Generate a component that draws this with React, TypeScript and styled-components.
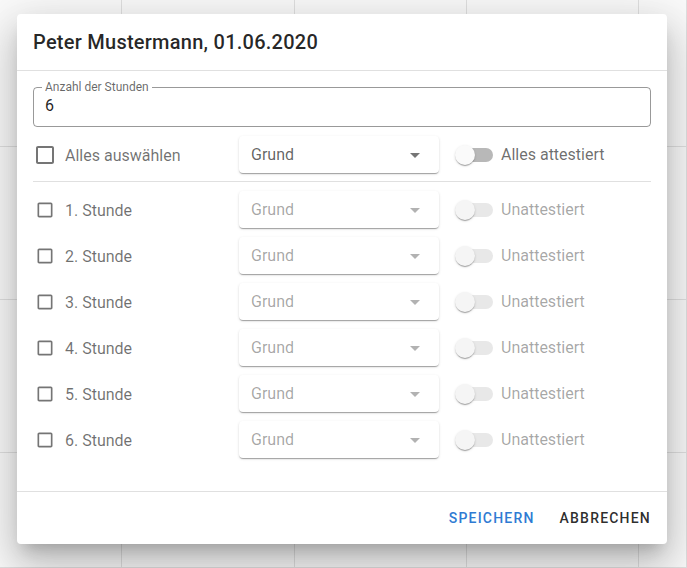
import React from "react";
import styled, { createGlobalStyle } from "styled-components";

const Global = createGlobalStyle`
  html, body { margin: 0; padding: 0; background: #fafafa; }
  body { font-family: Roboto, "Noto Sans", Arial, sans-serif; }
  * { box-sizing: border-box; }
`;

const Page = styled.div`
  position: relative;
  width: 100%;
  height: 100vh;
  overflow: hidden;
`;

const Calendar = styled.div`
  display: grid;
  grid-template-columns: 122px 173px 172px 172px 1fr;
  grid-template-rows: 147px 153px 153px 1fr;
  height: 100%;
`;

const Cell = styled.div`
  border-right: 1px solid #e0e0e0;
  border-bottom: 1px solid #e0e0e0;
`;

const Dialog = styled.div`
  position: absolute;
  left: 17px;
  top: 14px;
  width: 650px;
  background: #fff;
  border-radius: 4px;
  display: flex;
  flex-direction: column;
  box-shadow: 0px 11px 15px -7px rgba(0, 0, 0, 0.2),
    0px 24px 38px 3px rgba(0, 0, 0, 0.14), 0px 9px 46px 8px rgba(0, 0, 0, 0.12);
`;

const Title = styled.h2`
  margin: 0;
  padding: 16px;
  font-size: 20px;
  font-weight: 500;
  line-height: 24px;
  letter-spacing: 0.25px;
  color: rgba(0, 0, 0, 0.85);
`;

const Divider = styled.hr<{ $inset?: boolean }>`
  margin: ${(p) => (p.$inset ? "8px 0 0" : "0")};
  border: none;
  border-top: 1px solid rgba(0, 0, 0, 0.12);
  height: 0;
`;

const Content = styled.div`
  padding: 10px 16px 33px;
  display: flex;
  flex-direction: column;
`;

const Field = styled.fieldset`
  margin: 0;
  padding: 0 11px;
  height: 46px;
  border: 1px solid rgba(0, 0, 0, 0.4);
  border-radius: 4px;
  min-width: 0;
`;

const Legend = styled.legend`
  font-size: 12px;
  line-height: 12px;
  padding: 0 3px;
  margin-left: -3px;
  color: rgba(0, 0, 0, 0.6);
`;

const Value = styled.div`
  font-size: 16px;
  line-height: 24px;
  padding-top: 1px;
  color: rgba(0, 0, 0, 0.87);
`;

const Row = styled.div`
  display: grid;
  grid-template-columns: 206px 200px 1fr;
  align-items: center;
  height: 37px;
  margin-top: 9px;
`;

const CheckCell = styled.label`
  display: flex;
  align-items: center;
  gap: 8px;
  font-size: 16px;
  padding-top: 1px;
  color: rgba(0, 0, 0, 0.56);
`;

const IconSlot = styled.span`
  width: 24px;
  height: 24px;
  display: flex;
  align-items: center;
  justify-content: center;
  color: rgba(0, 0, 0, 0.54);
`;

const Select = styled.div<{ $disabled?: boolean }>`
  height: 37px;
  background: #fff;
  border-radius: 4px;
  box-shadow: 0px 2px 1px -1px rgba(0, 0, 0, 0.2),
    0px 1px 1px 0px rgba(0, 0, 0, 0.14), 0px 1px 3px 0px rgba(0, 0, 0, 0.12);
  display: flex;
  align-items: center;
  justify-content: space-between;
  padding: 0 12px 0 12px;
  font-size: 16px;
  color: ${(p) => (p.$disabled ? "rgba(0,0,0,0.36)" : "rgba(0,0,0,0.62)")};
`;

const Arrow = styled.svg<{ $disabled?: boolean }>`
  width: 24px;
  height: 24px;
  fill: ${(p) => (p.$disabled ? "rgba(0,0,0,0.3)" : "rgba(0,0,0,0.54)")};
`;

const SwitchCell = styled.div<{ $disabled?: boolean }>`
  display: flex;
  align-items: center;
  gap: 8px;
  margin-left: 16px;
  font-size: 16px;
  color: ${(p) => (p.$disabled ? "rgba(0,0,0,0.36)" : "rgba(0,0,0,0.58)")};
`;

const Switch = styled.span`
  position: relative;
  width: 38px;
  height: 20px;
  display: inline-flex;
  align-items: center;
`;

const Track = styled.span<{ $disabled?: boolean }>`
  margin-left: 2px;
  width: 36px;
  height: 14px;
  border-radius: 7px;
  background: ${(p) => (p.$disabled ? "#e8e8e8" : "#b8b8b8")};
`;

const Thumb = styled.span<{ $disabled?: boolean }>`
  position: absolute;
  left: 0;
  top: 0;
  width: 20px;
  height: 20px;
  border-radius: 50%;
  background: ${(p) => (p.$disabled ? "#f5f5f5" : "#fafafa")};
  box-shadow: 0px 2px 1px -1px rgba(0, 0, 0, 0.2),
    0px 1px 1px 0px rgba(0, 0, 0, 0.14), 0px 1px 3px 0px rgba(0, 0, 0, 0.12);
`;

const Actions = styled.div`
  display: flex;
  justify-content: flex-end;
  align-items: center;
  gap: 9px;
  padding: 8px;
`;

const Button = styled.button<{ $primary?: boolean }>`
  font-family: Roboto, "Noto Sans", Arial, sans-serif;
  font-size: 14px;
  font-weight: 500;
  line-height: 24px;
  letter-spacing: 1.2px;
  text-transform: uppercase;
  padding: 6px 8px;
  min-width: 64px;
  background: none;
  border: none;
  border-radius: 4px;
  cursor: pointer;
  color: ${(p) => (p.$primary ? "#2f7bd3" : "rgba(0,0,0,0.84)")};
`;

const CheckIcon: React.FC<{ size: number }> = ({ size }) => (
  <svg width={size} height={size} viewBox="0 0 24 24" fill="currentColor">
    <path d="M19 5v14H5V5h14m0-2H5c-1.11 0-2 .9-2 2v14c0 1.1.89 2 2 2h14c1.1 0 2-.9 2-2V5c0-1.1-.9-2-2-2z" />
  </svg>
);

const LineRow: React.FC<{
  label: string;
  big?: boolean;
  disabled?: boolean;
  switchLabel: string;
}> = ({ label, big, disabled, switchLabel }) => (
  <Row>
    <CheckCell>
      <IconSlot>
        <CheckIcon size={big ? 24 : 20} />
      </IconSlot>
      {label}
    </CheckCell>
    <Select $disabled={disabled}>
      Grund
      <Arrow viewBox="0 0 24 24" $disabled={disabled}>
        <path d="M7 10l5 5 5-5z" />
      </Arrow>
    </Select>
    <SwitchCell $disabled={disabled}>
      <Switch>
        <Track $disabled={disabled} />
        <Thumb $disabled={disabled} />
      </Switch>
      {switchLabel}
    </SwitchCell>
  </Row>
);

export default function App() {
  const hours = [1, 2, 3, 4, 5, 6];
  return (
    <Page>
      <Global />
      <Calendar>
        {Array.from({ length: 20 }).map((_, i) => (
          <Cell key={i} />
        ))}
      </Calendar>
      <Dialog>
        <Title>Peter Mustermann, 01.06.2020</Title>
        <Divider />
        <Content>
          <Field>
            <Legend>Anzahl der Stunden</Legend>
            <Value>6</Value>
          </Field>
          <LineRow label="Alles auswählen" big switchLabel="Alles attestiert" />
          <Divider $inset />
          {hours.map((h) => (
            <LineRow
              key={h}
              label={`${h}. Stunde`}
              disabled
              switchLabel="Unattestiert"
            />
          ))}
        </Content>
        <Divider />
        <Actions>
          <Button $primary>Speichern</Button>
          <Button>Abbrechen</Button>
        </Actions>
      </Dialog>
    </Page>
  );
}
